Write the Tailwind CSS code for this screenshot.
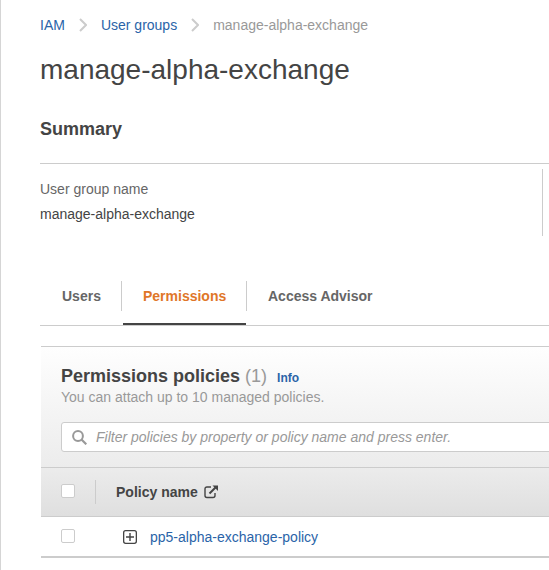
<!DOCTYPE html>
<html lang="en">
<head>
<meta charset="utf-8">
<title>manage-alpha-exchange</title>
<script src="https://cdn.jsdelivr.net/npm/@tailwindcss/browser@4"></script>
</head>
<body class="bg-white font-['Liberation_Sans',Arial,sans-serif] text-sm text-[#444]">
<main class="h-[570px] w-[549px] overflow-hidden border-l border-[#d5d5d5] pl-[39px] whitespace-nowrap">
  <nav class="flex h-5 items-center mt-[15px] text-[#2a64a8]">
    <a>IAM</a>
    <svg class="ml-[14px] mr-[14px] h-[14px] w-2 shrink-0" viewBox="0 0 8 14" fill="none" stroke="#ccc" stroke-width="2"><path d="M1 1l6 6-6 6"/></svg>
    <a>User groups</a>
    <svg class="ml-[14px] mr-[14px] h-[14px] w-2 shrink-0" viewBox="0 0 8 14" fill="none" stroke="#ccc" stroke-width="2"><path d="M1 1l6 6-6 6"/></svg>
    <span class="text-[#999]">manage-alpha-exchange</span>
  </nav>
  <h1 class="mt-[17px] text-[28px] leading-9">manage-alpha-exchange</h1>
  <h2 class="mt-[29px] h-[47px] border-b border-[#ccc] text-lg leading-6 font-bold">Summary</h2>
  <section class="flex h-[117px] justify-between pt-[5px]">
    <dl class="pt-[10px] leading-5">
      <dt class="text-[#666]">User group name</dt>
      <dd class="mt-[5px]">manage-alpha-exchange</dd>
    </dl>
    <div class="mr-[6px] h-[67px] w-px bg-[#ccc]"></div>
  </section>
  <div class="flex h-[45px] border-b border-[#ccc] font-bold leading-[30px] text-[#666]">
    <div class="h-[30px] w-[82px] border-r border-[#ccc] pl-[22px]">Users</div>
    <div class="ml-px h-[44px] w-[123px] border-b-2 border-[#444] pl-5 text-[#e07628]">Permissions</div>
    <div class="h-[30px] border-l border-[#ccc] pl-[21px]">Access Advisor</div>
  </div>
  <section class="ml-px mt-5">
    <div class="flex h-[171px] flex-col border-y border-[#ccc] bg-linear-to-b from-[#fefefe] via-[#ececec] via-71% to-[#dfdfdf]">
      <div class="h-[120px] pl-5 pt-[17px]">
        <div class="flex h-6 items-baseline leading-6">
          <h3 class="text-lg leading-6 font-bold">Permissions policies <span class="font-normal text-[#999]">(1)</span></h3>
          <a class="ml-[10px] text-xs font-bold text-[#2a64a8]">Info</a>
        </div>
        <p class="leading-[18px] text-[#999]">You can attach up to 10 managed policies.</p>
        <div class="mt-4 flex h-[30px] w-[520px] items-center rounded-[3px] border border-[#ccc] bg-white pl-[10px] text-[#999]">
          <svg class="mr-[9px] h-[15px] w-[15px] shrink-0" viewBox="0 0 15 15" fill="none" stroke="#999" stroke-width="2"><circle cx="6" cy="6" r="4.9"/><path d="M9.5 9.5l4.8 4.8" stroke-width="2.2"/></svg>
          <em>Filter policies by property or policy name and press enter.</em>
        </div>
      </div>
      <div class="flex h-[49px] items-center border-t border-[#ccc] font-bold">
        <div class="mb-[2px] ml-5 h-[14px] w-[14px] rounded-[2px] border border-[#ccc] bg-white"></div>
        <div class="ml-5 h-6 w-px bg-[#ccc]"></div>
        <span class="ml-5">Policy name</span>
        <svg class="ml-[6px] h-[14px] w-[15px]" viewBox="0 0 15 14" fill="none" stroke="#444" stroke-width="1.4"><path d="M7 2H3Q1 2 1 4v6.500Q1 12.500 3 12.500H9Q11 12.500 11 10.500V8"/><path d="M5.500 8.500L12 2" stroke-width="2"/><path d="M8.500 .5H14V6z" fill="#444" stroke="none"/></svg>
      </div>
    </div>
    <div class="flex h-[41px] items-center border-b-2 border-[#ccc]">
      <div class="mb-px ml-5 h-[14px] w-[14px] rounded-[2px] border border-[#ccc] bg-white"></div>
      <svg class="mt-px ml-[48px] h-[14px] w-[14px]" viewBox="0 0 14 14" fill="none" stroke="#444"><rect x=".65" y=".65" width="12.700" height="12.700" rx="2" stroke-width="1.300"/><path d="M7 3v8M3 7h8" stroke-width="1.400"/></svg>
      <a class="ml-[13px] text-[#2a64a8]">pp5-alpha-exchange-policy</a>
    </div>
  </section>
</main>
</body>
</html>
